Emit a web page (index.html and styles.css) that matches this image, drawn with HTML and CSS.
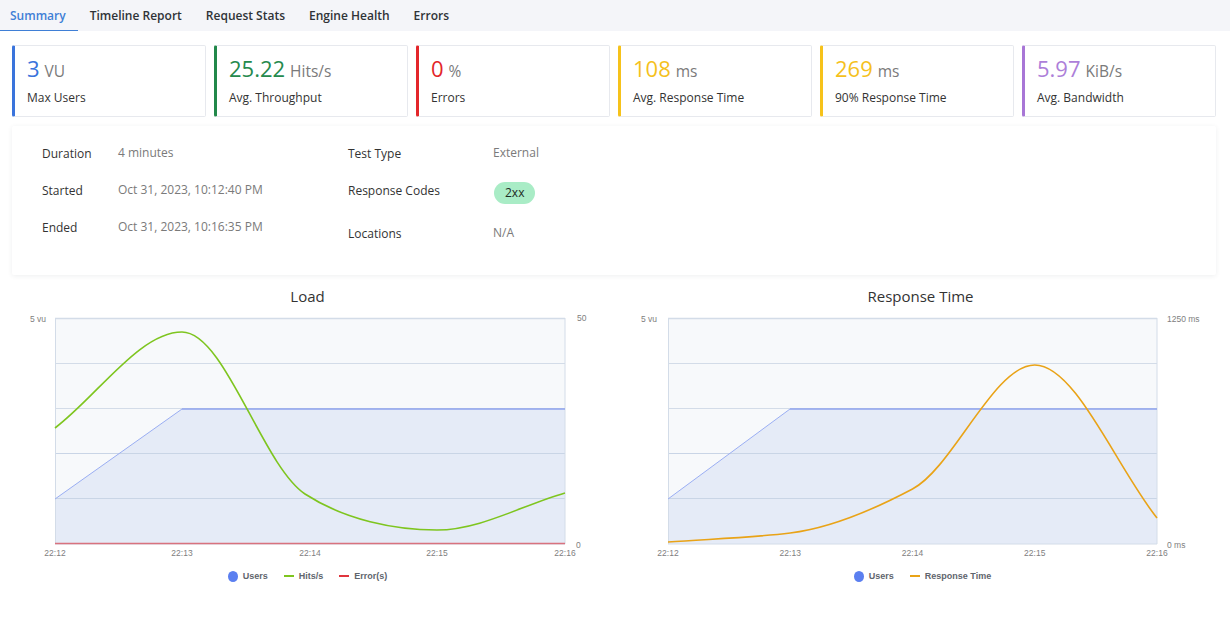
FILE: index.html
```html
<!DOCTYPE html>
<html lang="en">
<head>
<meta charset="utf-8">
<title>Summary</title>
<link rel="stylesheet" href="styles.css">
</head>
<body>
<nav class="tabs">
  <a class="tab active">Summary</a>
  <a class="tab">Timeline Report</a>
  <a class="tab">Request Stats</a>
  <a class="tab">Engine Health</a>
  <a class="tab">Errors</a>
</nav>
<main class="page">
  <div class="top">
    <section class="cards">
      <div class="card blue"><div class="val"><span class="num">3</span><span class="unit">VU</span></div><div class="lbl">Max Users</div></div>
      <div class="card green"><div class="val"><span class="num">25.22</span><span class="unit">Hits/s</span></div><div class="lbl">Avg. Throughput</div></div>
      <div class="card red"><div class="val"><span class="num">0</span><span class="unit">%</span></div><div class="lbl">Errors</div></div>
      <div class="card yellow"><div class="val"><span class="num">108</span><span class="unit">ms</span></div><div class="lbl">Avg. Response Time</div></div>
      <div class="card yellow"><div class="val"><span class="num">269</span><span class="unit">ms</span></div><div class="lbl">90% Response Time</div></div>
      <div class="card purple"><div class="val"><span class="num">5.97</span><span class="unit">KiB/s</span></div><div class="lbl">Avg. Bandwidth</div></div>
    </section>
    <section class="info">
      <dl class="info-col left">
        <dt>Duration</dt><dd>4 minutes</dd>
        <dt>Started</dt><dd>Oct 31, 2023, 10:12:40 PM</dd>
        <dt>Ended</dt><dd>Oct 31, 2023, 10:16:35 PM</dd>
      </dl>
      <dl class="info-col right">
        <dt>Test Type</dt><dd>External</dd>
        <dt>Response Codes</dt><dd><span class="badge">2xx</span></dd>
        <dt>Locations</dt><dd>N/A</dd>
      </dl>
    </section>
  </div>
  <section class="charts">
    <div class="chart">
      <h3 class="chart-title">Load</h3>
      <svg class="plot" width="615" height="253" viewBox="0 0 615 253">
        <g transform="translate(0,3)">
          <rect x="55" y="8" width="510" height="226" fill="#f7f9fb"/>
          <polygon points="55,189 182,99 565,99 565,234 55,234" fill="#e5ebf7"/>
          <g stroke="#d3dce8" stroke-width="1">
            <line x1="55" y1="8.5" x2="565" y2="8.5" stroke-width="1.5"/>
            <line x1="55" y1="53.5" x2="565" y2="53.5"/>
            <line x1="55" y1="98.5" x2="565" y2="98.5"/>
            <line x1="55" y1="143.5" x2="565" y2="143.5" stroke="#c9d5e6"/>
            <line x1="55" y1="188.5" x2="565" y2="188.5" stroke="#c9d5e6"/>
            <line x1="55" y1="234" x2="565" y2="234"/>
            <line x1="55.5" y1="8" x2="55.5" y2="234"/>
            <line x1="565" y1="8" x2="565" y2="234"/>
          </g>
          <polyline points="55,189 182,99" fill="none" stroke="#9aaef3" stroke-width="1"/>
          <line x1="182" y1="99" x2="565" y2="99" stroke="#8ea3ee" stroke-width="1.6"/>
          <line x1="55" y1="233.5" x2="565" y2="233.5" stroke="#d9727e" stroke-width="1.6"/>
          <path d="M55,118 C97.3,86 139.7,22 182,22 C224.7,22 262,155 305,184 C345,210 394.7,220 437,220 C479.7,220 522.3,195.3 565,183" fill="none" stroke="#7ec51f" stroke-width="1.6"/>
          <g class="ax">
            <text x="30" y="12">5 vu</text>
            <text x="577" y="11">50</text>
            <text x="576" y="238">0</text>
            <text x="55" y="246" text-anchor="middle">22:12</text>
            <text x="182" y="246" text-anchor="middle">22:13</text>
            <text x="310" y="246" text-anchor="middle">22:14</text>
            <text x="437" y="246" text-anchor="middle">22:15</text>
            <text x="565" y="246" text-anchor="middle">22:16</text>
          </g>
        </g>
      </svg>
      <div class="legend">
        <span class="lg"><i class="dot"></i>Users</span>
        <span class="lg"><i class="ln green-ln"></i>Hits/s</span>
        <span class="lg"><i class="ln red-ln"></i>Error(s)</span>
      </div>
    </div>
    <div class="chart">
      <h3 class="chart-title">Response Time</h3>
      <svg class="plot" width="615" height="253" viewBox="0 0 615 253">
        <g transform="translate(0,3)">
          <rect x="53" y="8" width="489" height="226" fill="#f7f9fb"/>
          <polygon points="53,189 175,99 542,99 542,234 53,234" fill="#e5ebf7"/>
          <g stroke="#d3dce8" stroke-width="1">
            <line x1="53" y1="8.5" x2="542" y2="8.5" stroke-width="1.5"/>
            <line x1="53" y1="53.5" x2="542" y2="53.5"/>
            <line x1="53" y1="98.5" x2="542" y2="98.5"/>
            <line x1="53" y1="143.5" x2="542" y2="143.5" stroke="#c9d5e6"/>
            <line x1="53" y1="188.5" x2="542" y2="188.5" stroke="#c9d5e6"/>
            <line x1="53" y1="234" x2="542" y2="234"/>
            <line x1="53.5" y1="8" x2="53.5" y2="234"/>
            <line x1="542" y1="8" x2="542" y2="234"/>
          </g>
          <polyline points="53,189 175,99" fill="none" stroke="#9aaef3" stroke-width="1"/>
          <line x1="175" y1="99" x2="542" y2="99" stroke="#8ea3ee" stroke-width="1.6"/>
          <path d="M53,232 C93.75,229 134.5,228 175.25,223 C216,218 256.75,200.6 297.5,179 C338.25,157.4 379,55 419.75,55 C460.5,55 501.25,157 542,208" fill="none" stroke="#e9a317" stroke-width="1.6"/>
          <g class="ax">
            <text x="26" y="12">5 vu</text>
            <text x="552" y="12">1250 ms</text>
            <text x="552" y="238">0 ms</text>
            <text x="53" y="246" text-anchor="middle">22:12</text>
            <text x="175.25" y="246" text-anchor="middle">22:13</text>
            <text x="297.5" y="246" text-anchor="middle">22:14</text>
            <text x="419.75" y="246" text-anchor="middle">22:15</text>
            <text x="542" y="246" text-anchor="middle">22:16</text>
          </g>
        </g>
      </svg>
      <div class="legend">
        <span class="lg"><i class="dot"></i>Users</span>
        <span class="lg"><i class="ln orange-ln"></i>Response Time</span>
      </div>
    </div>
  </section>
</main>
</body>
</html>
```
FILE: styles.css
```css
* { box-sizing: border-box; }
html, body { margin: 0; padding: 0; }
body {
  background: #ffffff;
  font-family: "Open Sans", "Noto Sans", "Liberation Sans", sans-serif;
  color: #333;
  width: 1230px;
  height: 643px;
  overflow: hidden;
}
.tabs {
  display: flex;
  height: 31px;
  background: #f4f5f9;
  align-items: stretch;
}
.tab {
  display: flex;
  align-items: center;
  padding: 0 12px;
  font-size: 12px;
  font-weight: 600;
  color: #2f3337;
  border-bottom: 1.5px solid transparent;
  cursor: pointer;
}
.tab.active {
  color: #3f7fd6;
  border-bottom-color: #3f7fd6;
  padding: 0 12px 0 10px;
}
.top {
  padding: 14px 14px 0 12px;
}
.cards {
  display: grid;
  grid-template-columns: repeat(6, 1fr);
  gap: 8px;
}
.card {
  height: 72px;
  background: #fff;
  border: 1px solid #e7e9ee;
  border-left: 3px solid #3f7fd6;
  border-radius: 2px;
  padding: 8px 0 0 12px;
}
.card.blue { border-left-color: #3a74dc; }
.card.green { border-left-color: #22884a; }
.card.red { border-left-color: #e3262a; }
.card.yellow { border-left-color: #f6c21a; }
.card.purple { border-left-color: #a876d6; }
.val { height: 28px; display: flex; align-items: baseline; }
.num { font-size: 22px; line-height: 28px; font-weight: 400; }
.unit { font-size: 15.5px; color: #7a7a7a; margin-left: 5px; }
.blue .num { color: #3a74dc; }
.green .num { color: #258a4d; }
.red .num { color: #e3262a; }
.yellow .num { color: #f5c11c; }
.purple .num { color: #ad7fd9; }
.lbl { font-size: 12px; color: #333; margin-top: 7px; line-height: 18px; }
.info {
  margin-top: 9px;
  height: 149px;
  background: #fff;
  box-shadow: 0 1px 5px rgba(40, 50, 70, 0.08);
  border-radius: 2px;
  display: flex;
  padding: 19px 30px 0 30px;
}
.info-col {
  margin: 0;
  display: grid;
  row-gap: 19px;
  align-content: start;
  align-items: start;
}
.info-col.left { width: 306px; grid-template-columns: 76px auto; }
.info-col.right { grid-template-columns: 145px auto; }
.info-col dt { font-size: 12px; line-height: 18px; color: #333; }
.info-col dd { margin: 0; font-size: 12px; line-height: 16px; color: #7a7a7a; }
.info-col.right dd:nth-of-type(2) { height: 24px; }
.badge {
  display: inline-block;
  height: 22px;
  line-height: 22px;
  padding: 0 11px;
  margin-left: 1px;
  border-radius: 11px;
  background: #a9ecc6;
  color: #1d2b24;
  font-size: 12px;
}
.charts {
  display: grid;
  grid-template-columns: 615px 615px;
  margin-top: 12px;
}
.chart { display: flex; flex-direction: column; align-items: stretch; }
.chart-title {
  margin: 0;
  text-align: center;
  font-size: 15px;
  line-height: 19px;
  font-weight: 400;
  color: #333;
}
.chart + .chart .chart-title { padding-right: 4px; }
.plot { display: block; margin-top: 1px; }
.ax text {
  font-family: "Liberation Sans", Arial, sans-serif;
  font-size: 8.5px;
  fill: #808080;
}
.legend {
  margin-top: 9px;
  display: flex;
  justify-content: center;
  gap: 16px;
  font-family: "Liberation Sans", Arial, sans-serif;
  font-size: 9px;
  font-weight: 700;
  color: #60656d;
  line-height: 14px;
}
.lg { display: flex; align-items: center; }
.dot {
  display: inline-block;
  width: 10px;
  height: 11px;
  border-radius: 50%;
  background: #5b7ff0;
  margin-right: 5px;
}
.ln {
  display: inline-block;
  width: 10px;
  height: 2px;
  margin-right: 5px;
}
.green-ln { background: #7ec51f; }
.red-ln { background: #e0353d; }
.orange-ln { background: #e9a317; }
```
